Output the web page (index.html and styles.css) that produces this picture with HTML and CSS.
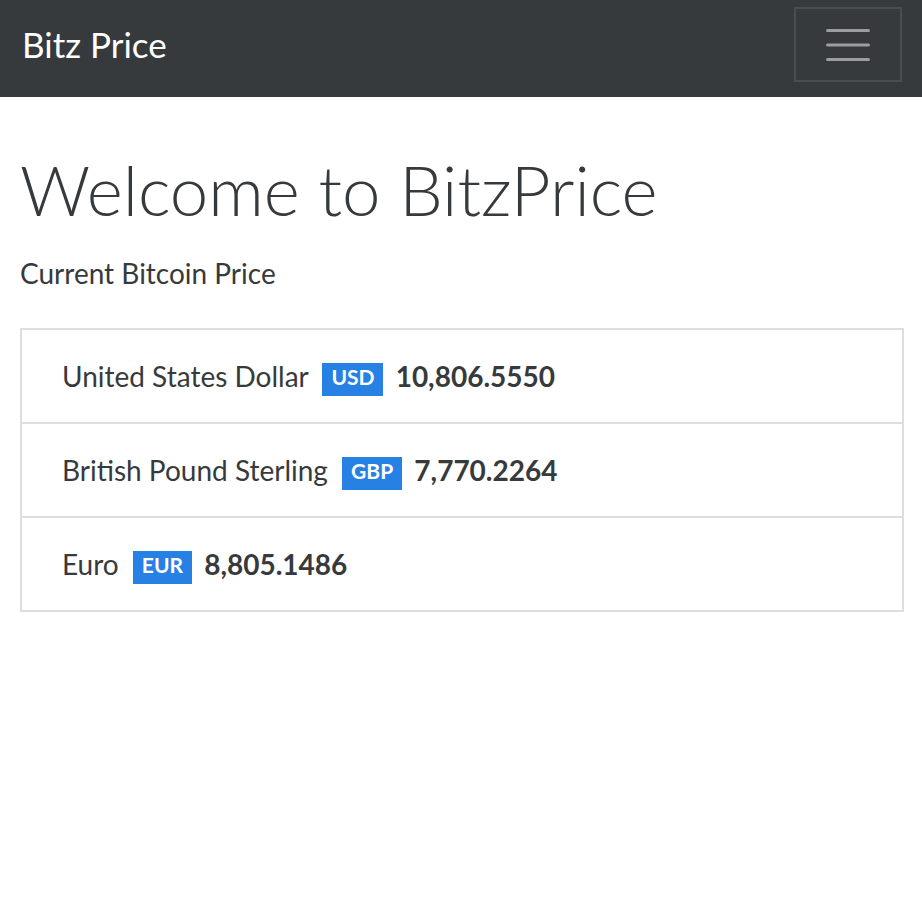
FILE: index.html
```html
<!DOCTYPE html>
<html lang="en">
<head>
<meta charset="utf-8">
<title>Bitz Price</title>
<link rel="stylesheet" href="styles.css">
</head>
<body>
<nav class="navbar">
  <a class="brand" href="#">Bitz Price</a>
  <button class="toggler" type="button" aria-label="Toggle navigation">
    <svg class="toggler-icon" width="44" height="34" viewBox="0 0 44 34">
      <path d="M1.5 2.5H42.5M1.5 17H42.5M1.5 31.5H42.5" stroke="rgba(255,255,255,0.5)" stroke-width="3" stroke-linecap="round"/>
    </svg>
  </button>
</nav>
<main class="container">
  <h1 class="title">Welcome to BitzPrice</h1>
  <p class="lead">Current Bitcoin Price</p>
  <ul class="list">
    <li class="item">United States Dollar <span class="badge">USD</span> <strong class="price">10,806.5550</strong></li>
    <li class="item">British Pound Sterling <span class="badge">GBP</span> <strong class="price">7,770.2264</strong></li>
    <li class="item">Euro <span class="badge">EUR</span> <strong class="price">8,805.1486</strong></li>
  </ul>
</main>
</body>
</html>
```
FILE: styles.css
```css
html, body {
  margin: 0;
  padding: 0;
  background: #fff;
}
body {
  font-family: "Lato", "Open Sans", sans-serif;
  color: #373a3c;
}
.navbar {
  height: 97px;
  box-sizing: border-box;
  background: #373a3c;
  display: flex;
  justify-content: space-between;
  align-items: flex-start;
  padding: 7px 20px 0 22px;
}
.brand {
  color: #fff;
  text-decoration: none;
  font-size: 35px;
  line-height: 74px;
}
.toggler {
  width: 108px;
  height: 75px;
  box-sizing: border-box;
  border: 2px solid #4b4e50;
  background: transparent;
  padding: 0;
  display: flex;
  align-items: center;
  justify-content: center;
}
.toggler-icon {
  display: block;
}
.container {
  padding: 0 18px 0 20px;
}
.title {
  margin: 0;
  padding-top: 52px;
  font-size: 69px;
  font-weight: 300;
  line-height: 1.2;
}
.lead {
  margin: 20px 0 0;
  font-size: 28px;
  line-height: 1.5;
}
.list {
  list-style: none;
  margin: 34px 0 0;
  padding: 0;
  border: 2px solid #dedede;
}
.item {
  padding: 24px 40px 23px;
  font-size: 28px;
  line-height: 45px;
  border-top: 2px solid #dedede;
}
.item:first-child {
  border-top: 0;
}
.badge {
  display: inline-block;
  background: #2780e3;
  color: #fff;
  font-weight: 700;
  font-size: 21px;
  line-height: 28px;
  padding: 0 9px 5px;
  margin: 0 5px 0 7px;
  vertical-align: 2px;
}
.price {
  font-weight: 700;
}
```
